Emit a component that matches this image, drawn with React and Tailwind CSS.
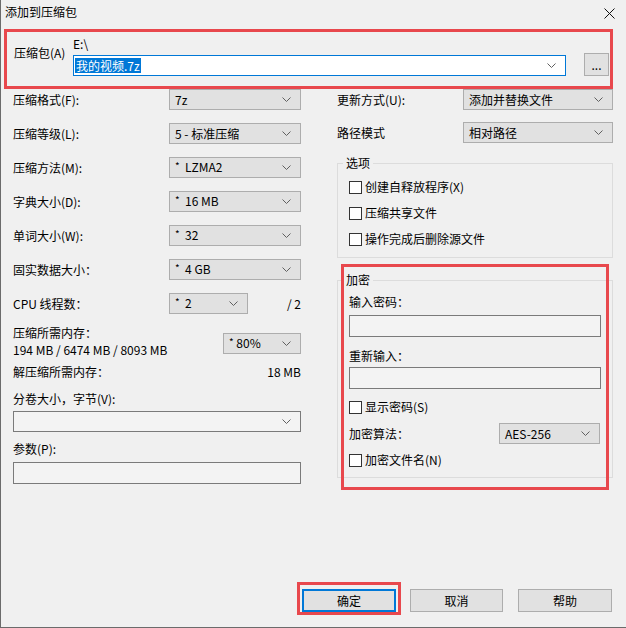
import React from 'react';

const Chevron = () => (
    <svg width="9" height="5" viewBox="0 0 9 5" className="shrink-0">
        <path d="M0.5 0.5 L4.5 4.5 L8.5 0.5" fill="none" stroke="#606060" strokeWidth="1" />
    </svg>
);

const Combo = ({ value, className = '' }) => (
    <div className={`flex items-center justify-between h-[21px] bg-[#e1e1e1] border border-[#adadad] pl-[5px] pr-[9px] shrink-0 ${className}`}>
        <span className="whitespace-pre">{value}</span>
        <Chevron />
    </div>
);

const Star = ({ v }) => (
    <span className="whitespace-pre">
        <span className="text-[10px] relative -top-[2px]">*</span>
        {v}
    </span>
);

const Check = ({ label, className = '' }) => (
    <div className={`flex items-center h-[16px] ml-[6px] ${className}`}>
        <span className="w-[13px] h-[13px] border border-[#333333] bg-white mr-[3px] shrink-0" />
        <span>{label}</span>
    </div>
);

const Button = ({ label, className = '' }) => (
    <div className={`h-[23px] flex items-center justify-center bg-[#e1e1e1] border border-[#adadad] ${className}`}>
        {label}
    </div>
);

const App = () => {
    const rows = [
        ['压缩格式(F):', '7z'],
        ['压缩等级(L):', '5 - 标准压缩'],
        ['压缩方法(M):', <Star v="  LZMA2" />],
        ['字典大小(D):', <Star v="  16 MB" />],
        ['单词大小(W):', <Star v="  32" />],
        ['固实数据大小：', <Star v="  4 GB" />],
    ];

    return (
        <div className="w-[626px] h-[628px] bg-[#f0f0f0] border-l border-b border-[#6b6b6b] flex flex-col font-['Noto_Sans_CJK_SC',sans-serif] text-[12px] leading-[16px] text-black overflow-hidden">
            {/* title bar */}
            <div className="h-[29px] flex items-start justify-between pl-[4px] pr-[11px] shrink-0">
                <span className="mt-[4px]">添加到压缩包</span>
                <svg width="11" height="11" viewBox="0 0 11 11" className="mt-[8px]">
                    <path d="M0.5 0.5 L10.5 10.5 M10.5 0.5 L0.5 10.5" stroke="#111" strokeWidth="1" />
                </svg>
            </div>

            {/* archive path */}
            <div className="ml-[3px] w-[609px] h-[60px] border-[3px] border-[#e8484d] flex items-start pl-[7px] shrink-0">
                <span className="w-[59px] mt-[13px] shrink-0">压缩包(A)</span>
                <div className="w-[493px] flex flex-col shrink-0">
                    <span className="mt-[4px]">E:\</span>
                    <div className="mt-[3px] h-[21px] bg-white border border-[#0078d7] flex items-center justify-between pl-[1px] pr-[9px]">
                        <span className="bg-[#0078d7] text-white px-[1px] leading-[15px]">我的视频.7z</span>
                        <Chevron />
                    </div>
                </div>
                <Button label="..." className="ml-[18px] mt-[21px] w-[25px] shrink-0" />
            </div>

            {/* body */}
            <div className="flex pl-[12px]">
                {/* left column */}
                <div className="w-[288px] flex flex-col shrink-0">
                    {rows.map(([label, value], i) => (
                        <div key={i} className="flex items-center justify-between h-[21px] mb-[13px]">
                            <span>{label}</span>
                            <Combo value={value} className="w-[132px]" />
                        </div>
                    ))}
                    <div className="flex items-center h-[21px]">
                        <span className="w-[156px] shrink-0">CPU 线程数：</span>
                        <Combo value={<Star v="  2" />} className="w-[79px]" />
                        <span className="ml-auto">/ 2</span>
                    </div>
                    <div className="flex items-start justify-between mt-[10px]">
                        <div className="flex flex-col leading-[17px]">
                            <span>压缩所需内存：</span>
                            <span>194 MB / 6474 MB / 8093 MB</span>
                        </div>
                        <Combo value={<Star v=" 80%" />} className="w-[78px] mt-[9px]" />
                    </div>
                    <div className="flex justify-between mt-[6px]">
                        <span>解压缩所需内存：</span>
                        <span>18 MB</span>
                    </div>
                    <span className="mt-[11px]">分卷大小，字节(V):</span>
                    <div className="mt-[4px] h-[21px] flex items-center justify-end pr-[9px] bg-[#f3f3f3] border border-[#7a7a7a]">
                        <Chevron />
                    </div>
                    <span className="mt-[9px]">参数(P):</span>
                    <div className="mt-[5px] h-[22px] border border-[#7a7a7a] bg-[#f3f3f3]" />
                </div>

                {/* right column */}
                <div className="ml-[36px] w-[276px] flex flex-col shrink-0">
                    <div className="flex items-center justify-between h-[21px]">
                        <span>更新方式(U):</span>
                        <Combo value="添加并替换文件" className="w-[150px]" />
                    </div>
                    <div className="flex items-center justify-between h-[21px] mt-[12px]">
                        <span>路径模式</span>
                        <Combo value="相对路径" className="w-[150px]" />
                    </div>

                    <fieldset className="mt-[12px] border border-[#dcdcdc] pl-[5px] pb-[10px]">
                        <legend className="px-[3px]">选项</legend>
                        <Check label="创建自释放程序(X)" className="mt-[8px]" />
                        <Check label="压缩共享文件" className="mt-[10px]" />
                        <Check label="操作完成后删除源文件" className="mt-[10px]" />
                    </fieldset>

                    <div className="relative mt-[14px]">
                        <fieldset className="border border-[#dcdcdc] pl-[5px] pr-[11px] pb-[9px]">
                            <legend className="px-[3px]">加密</legend>
                            <div className="ml-[6px] flex flex-col">
                                <span className="mt-[6px]">输入密码：</span>
                                <div className="mt-[5px] h-[22px] border border-[#7a7a7a] bg-[#f3f3f3]" />
                                <span className="mt-[11px]">重新输入：</span>
                                <div className="mt-[3px] h-[22px] border border-[#7a7a7a] bg-[#f3f3f3]" />
                            </div>
                            <Check label="显示密码(S)" className="mt-[10px]" />
                            <div className="ml-[6px] mt-[8px] flex items-center justify-between h-[21px]">
                                <span>加密算法：</span>
                                <Combo value="AES-256" className="w-[101px] mr-[1px]" />
                            </div>
                            <Check label="加密文件名(N)" className="mt-[8px]" />
                        </fieldset>
                        <div className="absolute left-[4px] -top-[8px] w-[268px] h-[226px] border-[3px] border-[#e8484d] pointer-events-none" />
                    </div>
                </div>
            </div>

            {/* buttons */}
            <div className="mt-auto flex justify-end items-start pr-[14px] pb-[12px]">
                <div className="border-[3px] border-[#e8484d] px-[2px] pt-[4px]">
                    <div className="w-[94px] h-[23px] flex items-center justify-center bg-[#e1e1e1] border-2 border-[#0078d7]">确定</div>
                </div>
                <Button label="取消" className="ml-[9px] mt-[7px] w-[93px]" />
                <Button label="帮助" className="ml-[15px] mt-[7px] w-[94px]" />
            </div>
        </div>
    );
};

export default App;
